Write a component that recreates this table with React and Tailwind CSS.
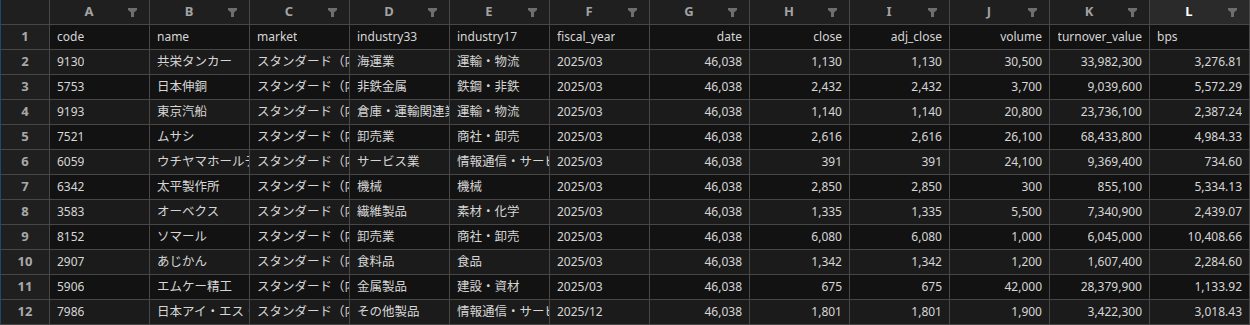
import React from "react";

const cols = ["A", "B", "C", "D", "E", "F", "G", "H", "I", "J", "K", "L"];
// which columns hold numbers (right aligned)
const right = [false, false, false, false, false, false, true, true, true, true, true, true];

const header = ["code", "name", "market", "industry33", "industry17", "fiscal_year", "date", "close", "adj_close", "volume", "turnover_value", "bps"];

const mk = "スタンダード（内国株式）";
const rows = [
  ["9130", "共栄タンカー", mk, "海運業", "運輸・物流", "2025/03", "46,038", "1,130", "1,130", "30,500", "33,982,300", "3,276.81"],
  ["5753", "日本伸銅", mk, "非鉄金属", "鉄鋼・非鉄", "2025/03", "46,038", "2,432", "2,432", "3,700", "9,039,600", "5,572.29"],
  ["9193", "東京汽船", mk, "倉庫・運輸関連業", "運輸・物流", "2025/03", "46,038", "1,140", "1,140", "20,800", "23,736,100", "2,387.24"],
  ["7521", "ムサシ", mk, "卸売業", "商社・卸売", "2025/03", "46,038", "2,616", "2,616", "26,100", "68,433,800", "4,984.33"],
  ["6059", "ウチヤマホールディングス", mk, "サービス業", "情報通信・サービスその他", "2025/03", "46,038", "391", "391", "24,100", "9,369,400", "734.60"],
  ["6342", "太平製作所", mk, "機械", "機械", "2025/03", "46,038", "2,850", "2,850", "300", "855,100", "5,334.13"],
  ["3583", "オーベクス", mk, "繊維製品", "素材・化学", "2025/03", "46,038", "1,335", "1,335", "5,500", "7,340,900", "2,439.07"],
  ["8152", "ソマール", mk, "卸売業", "商社・卸売", "2025/03", "46,038", "6,080", "6,080", "1,000", "6,045,000", "10,408.66"],
  ["2907", "あじかん", mk, "食料品", "食品", "2025/03", "46,038", "1,342", "1,342", "1,200", "1,607,400", "2,284.60"],
  ["5906", "エムケー精工", mk, "金属製品", "建設・資材", "2025/03", "46,038", "675", "675", "42,000", "28,379,900", "1,133.92"],
  ["7986", "日本アイ・エス・ケイ", mk, "その他製品", "情報通信・サービスその他", "2025/12", "46,038", "1,801", "1,801", "1,900", "3,422,300", "3,018.43"],
];

function Funnel() {
  return (
    <svg width="9" height="9" viewBox="0 0 9 9" className="shrink-0">
      <path d="M0 0h9v2L6 4.5V9H3V4.5L0 2z" fill="#6e6e6e" />
    </svg>
  );
}

function Cell({ text, alignRight, dark }) {
  const jp = /[^\x00-\x7F]/.test(text); // japanese glyphs run a touch larger
  return (
    <div
      className={`h-[25px] border-r border-b border-[#474747] flex items-center min-w-0 text-[#d6d6d6] ${
        alignRight ? "justify-end px-[7px]" : "justify-start pl-[7px]"
      } ${dark ? "bg-[#121212]" : "bg-[#1b1b1b]"}`}
    >
      <span className={`block min-w-0 overflow-hidden whitespace-nowrap ${jp ? "text-[12.5px]" : ""}`}>{text}</span>
    </div>
  );
}

export default function App() {
  const all = [header, ...rows];

  return (
    <div
      className="w-[1250px] h-[325px] overflow-hidden bg-[#1b1b1b] text-[12px]"
      style={{ fontFamily: '"Noto Sans", "Noto Sans CJK JP", sans-serif' }}
    >
      <div className="grid grid-cols-[50px_repeat(12,100px)]">
        {/* column letters */}
        <div className="h-[25px] border-l border-l-[#1d4a6c] border-r border-b border-[#474747] bg-[#1f1f1f]" />
        {cols.map((c, i) => (
          <div
            key={c}
            className={`h-[25px] border-r border-b border-[#474747] flex items-center pr-[12px] ${
              i === 11 ? "bg-[#2a2a2a]" : "bg-[#1f1f1f]"
            }`}
          >
            <span className={`flex-1 text-center text-[13px] font-bold ${i === 11 ? "text-white" : "text-[#a3a3a3]"}`}>{c}</span>
            <Funnel />
          </div>
        ))}

        {all.map((r, ri) => (
          <React.Fragment key={ri}>
            <div className="h-[25px] border-l border-l-[#1d4a6c] border-r border-b border-[#474747] bg-[#1f1f1f] flex items-center justify-center text-[13px] font-bold text-[#a8a8a8]">
              {ri + 1}
            </div>
            {r.map((v, ci) => (
              <Cell key={ci} text={v} alignRight={ri === 0 ? right[ci] && ci !== 11 : right[ci]} dark={ri % 2 === 0} />
            ))}
          </React.Fragment>
        ))}
      </div>
    </div>
  );
}
